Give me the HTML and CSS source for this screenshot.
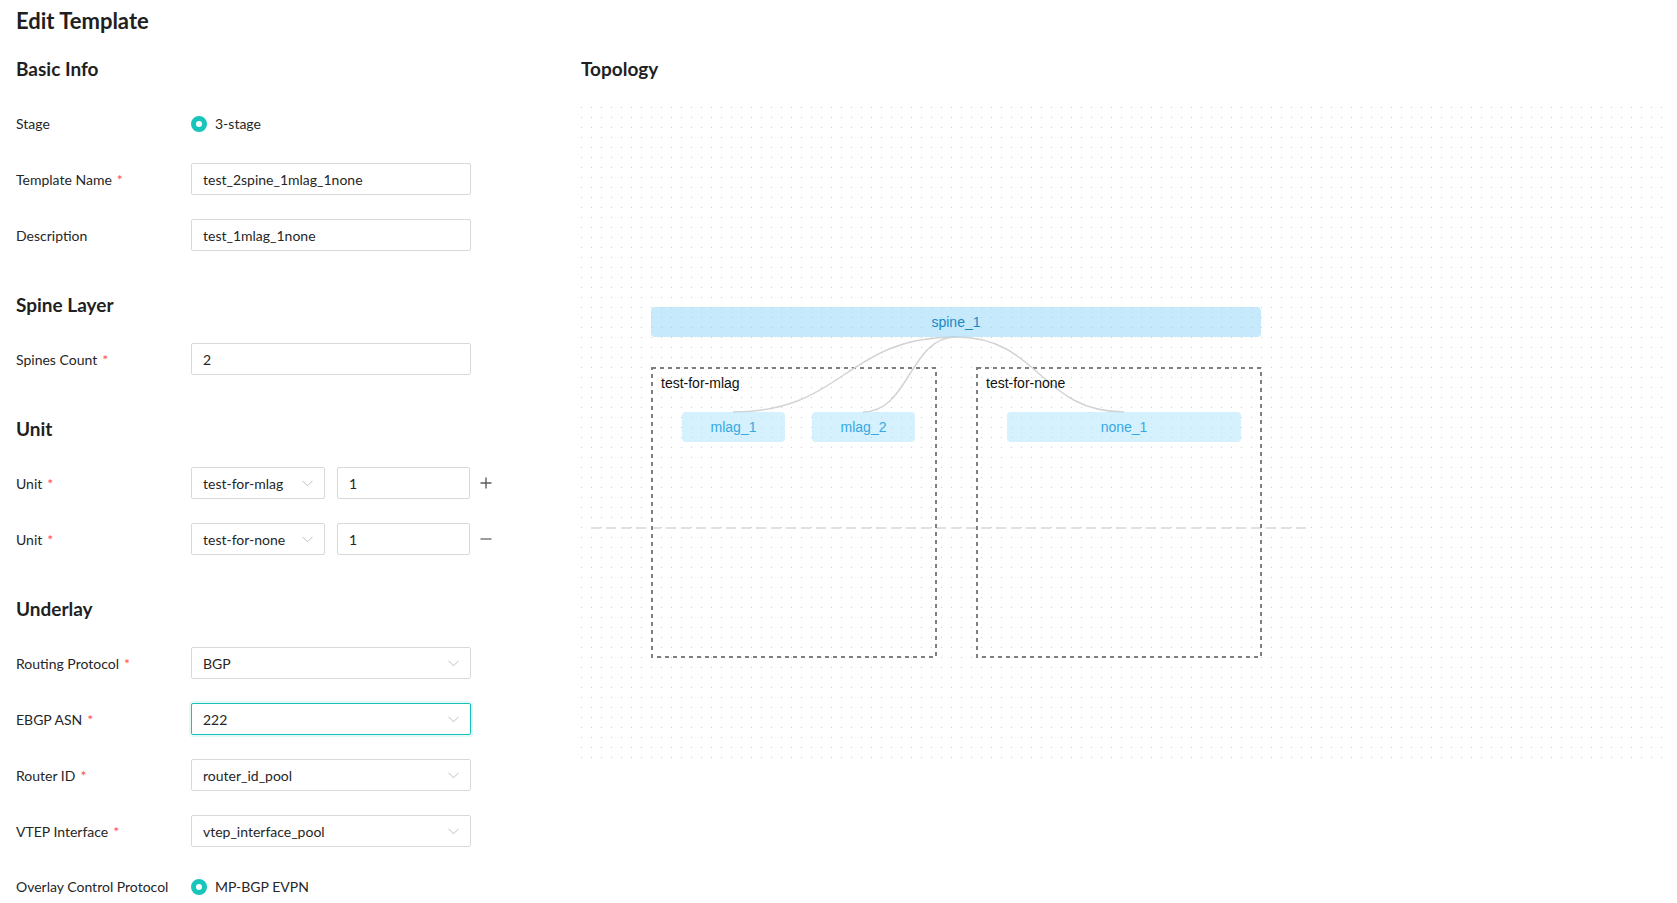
FILE: index.html
```html
<!DOCTYPE html>
<html lang="en">
<head>
<meta charset="utf-8">
<title>Edit Template</title>
<link rel="stylesheet" href="styles.css">
</head>
<body>
<div class="page">
  <h1 class="title">Edit Template</h1>
  <div class="layout">
    <div class="form-col">
      <section class="section">
        <h2 class="section-title">Basic Info</h2>
        <div class="row row-radio">
          <div class="label">Stage</div>
          <div class="radio"><span class="radio-dot"></span><span>3-stage</span></div>
        </div>
        <div class="row">
          <div class="label">Template Name<span class="req">*</span></div>
          <div class="input">test_2spine_1mlag_1none</div>
        </div>
        <div class="row">
          <div class="label">Description</div>
          <div class="input">test_1mlag_1none</div>
        </div>
      </section>

      <section class="section">
        <h2 class="section-title">Spine Layer</h2>
        <div class="row">
          <div class="label">Spines Count<span class="req">*</span></div>
          <div class="input">2</div>
        </div>
      </section>

      <section class="section">
        <h2 class="section-title">Unit</h2>
        <div class="row">
          <div class="label">Unit<span class="req">*</span></div>
          <div class="input select unit-select"><span>test-for-mlag</span><svg class="chev" viewBox="0 0 11 7"><path d="M0.5 0.8 L5.5 5.8 L10.5 0.8" /></svg></div>
          <div class="input unit-num">1</div>
          <svg class="icon-btn" viewBox="0 0 12 12"><path d="M6 0.5V11.5M0.5 6H11.5" /></svg>
        </div>
        <div class="row">
          <div class="label">Unit<span class="req">*</span></div>
          <div class="input select unit-select"><span>test-for-none</span><svg class="chev" viewBox="0 0 11 7"><path d="M0.5 0.8 L5.5 5.8 L10.5 0.8" /></svg></div>
          <div class="input unit-num">1</div>
          <svg class="icon-btn minus" viewBox="0 0 12 12"><path d="M0.5 6H11.5" /></svg>
        </div>
      </section>

      <section class="section last">
        <h2 class="section-title">Underlay</h2>
        <div class="row">
          <div class="label">Routing Protocol<span class="req">*</span></div>
          <div class="input select"><span>BGP</span><svg class="chev" viewBox="0 0 11 7"><path d="M0.5 0.8 L5.5 5.8 L10.5 0.8" /></svg></div>
        </div>
        <div class="row">
          <div class="label">EBGP ASN<span class="req">*</span></div>
          <div class="input select focused"><span>222</span><svg class="chev" viewBox="0 0 11 7"><path d="M0.5 0.8 L5.5 5.8 L10.5 0.8" /></svg></div>
        </div>
        <div class="row">
          <div class="label">Router ID<span class="req">*</span></div>
          <div class="input select"><span>router_id_pool</span><svg class="chev" viewBox="0 0 11 7"><path d="M0.5 0.8 L5.5 5.8 L10.5 0.8" /></svg></div>
        </div>
        <div class="row">
          <div class="label">VTEP Interface<span class="req">*</span></div>
          <div class="input select"><span>vtep_interface_pool</span><svg class="chev" viewBox="0 0 11 7"><path d="M0.5 0.8 L5.5 5.8 L10.5 0.8" /></svg></div>
        </div>
        <div class="row row-radio">
          <div class="label">Overlay Control Protocol</div>
          <div class="radio"><span class="radio-dot"></span><span>MP-BGP EVPN</span></div>
        </div>
      </section>
    </div>

    <div class="topo-col">
      <h2 class="section-title topo-title">Topology</h2>
      <div class="canvas">
        <svg class="layer" width="1090" height="651">
          <defs>
            <pattern id="dots" width="10" height="10" patternUnits="userSpaceOnUse">
              <rect x="0" y="0" width="1" height="1" fill="#cccccc" />
            </pattern>
          </defs>
          <rect width="1090" height="651" fill="url(#dots)" />
          <line class="divider" x1="10" y1="421" x2="725" y2="421" />
          <rect class="group-box" x="71" y="261" width="284" height="289" />
          <rect class="group-box" x="396" y="261" width="284" height="289" />
          <path class="link" d="M375 230 C263.5 230 263.5 305 152 305" />
          <path class="link" d="M375 230 C328.5 230 328.5 305 282 305" />
          <path class="link" d="M375 230 C459 230 459 305 543 305" />
        </svg>
        <div class="group-label gl-mlag">test-for-mlag</div>
        <div class="group-label gl-none">test-for-none</div>
        <div class="node spine n-spine">spine_1</div>
        <div class="node leaf n-mlag1">mlag_1</div>
        <div class="node leaf n-mlag2">mlag_2</div>
        <div class="node leaf n-none1">none_1</div>
      </div>
    </div>
  </div>
</div>
</body>
</html>
```

FILE: styles.css
```css
* {
  box-sizing: border-box;
}

html, body {
  margin: 0;
  overflow: hidden;
  background: #ffffff;
}

body {
  font-family: Lato, "Noto Sans", sans-serif;
  color: #262626;
}

.page {
  padding: 7px 0 0 16px;
}

.title {
  margin: 0 0 22px;
  font-size: 22px;
  line-height: 28px;
  font-weight: 700;
  color: #1f1f1f;
}

.layout {
  display: flex;
  align-items: flex-start;
}

.form-col {
  width: 565px;
  flex: none;
}

.section {
  margin-bottom: 42px;
}

.section.last {
  margin-bottom: 0;
}

.section-title {
  margin: 0 0 26px;
  font-size: 19px;
  line-height: 24px;
  font-weight: 700;
  color: #1f1f1f;
}

.row {
  display: flex;
  align-items: center;
  height: 32px;
  margin-bottom: 24px;
  font-size: 14px;
}

.row.row-radio {
  height: 31px;
}

.section:first-child .section-title {
  margin-bottom: 27px;
}

.section .row:last-child {
  margin-bottom: 0;
}

.label {
  width: 175px;
  flex: none;
  font-size: 14px;
  color: #262626;
  white-space: nowrap;
}

.req {
  color: #ff4d4f;
  margin-left: 5px;
}

.input {
  width: 280px;
  height: 32px;
  flex: none;
  display: flex;
  align-items: center;
  padding: 0 11px;
  border: 1px solid #d9d9d9;
  border-radius: 2px;
  background: #fff;
  font-size: 14px;
  color: #262626;
}

.select {
  justify-content: space-between;
}

.chev {
  width: 11px;
  height: 7px;
  flex: none;
}

.chev path {
  fill: none;
  stroke: #bfbfbf;
  stroke-width: 1;
}

.focused {
  border-color: #17c2bb;
  box-shadow: 0 0 0 2px rgba(23, 194, 187, 0.12);
}

.unit-select {
  width: 134px;
}

.unit-num {
  width: 133px;
  margin-left: 12px;
}

.icon-btn {
  width: 12px;
  height: 12px;
  margin-left: 10px;
  flex: none;
}

.icon-btn path {
  fill: none;
  stroke: #5c5c5c;
  stroke-width: 1.4;
}

.icon-btn.minus path {
  stroke: #707070;
}

.radio {
  display: flex;
  align-items: center;
  gap: 8px;
  font-size: 14px;
}

.radio-dot {
  width: 16px;
  height: 16px;
  border: 5px solid #17c5bb;
  border-radius: 50%;
  background: #fff;
}

/* Topology */
.topo-col {
  flex: 1;
}

.topo-title {
  margin-bottom: 26px;
}

.canvas {
  position: relative;
  width: 1090px;
  height: 651px;
}

.layer {
  position: absolute;
  left: 0;
  top: 0;
}

.divider {
  stroke: #dde1e6;
  stroke-width: 2;
  stroke-dasharray: 10 5;
}

.group-box {
  fill: none;
  stroke: #7f7f7f;
  stroke-width: 2;
  stroke-dasharray: 4 4;
}

.link {
  fill: none;
  stroke: #d3d3d3;
  stroke-width: 1.5;
}

.group-label {
  position: absolute;
  font-family: "Liberation Sans", Arial, sans-serif;
  font-size: 14px;
  line-height: 16px;
  color: #111;
}

.gl-mlag {
  left: 80px;
  top: 268px;
}

.gl-none {
  left: 405px;
  top: 268px;
}

.node {
  position: absolute;
  height: 30px;
  display: flex;
  align-items: center;
  justify-content: center;
  border-radius: 4px;
  font-family: "Liberation Sans", Arial, sans-serif;
  font-size: 14px;
}

.spine {
  background: rgba(142, 211, 247, 0.5);
  color: #1a88c4;
}

.leaf {
  background: rgba(171, 227, 251, 0.5);
  color: #36a9e3;
}

.n-spine {
  left: 70px;
  top: 200px;
  width: 610px;
}

.n-mlag1 {
  left: 101px;
  top: 305px;
  width: 103px;
}

.n-mlag2 {
  left: 231px;
  top: 305px;
  width: 103px;
}

.n-none1 {
  left: 426px;
  top: 305px;
  width: 234px;
}
```
